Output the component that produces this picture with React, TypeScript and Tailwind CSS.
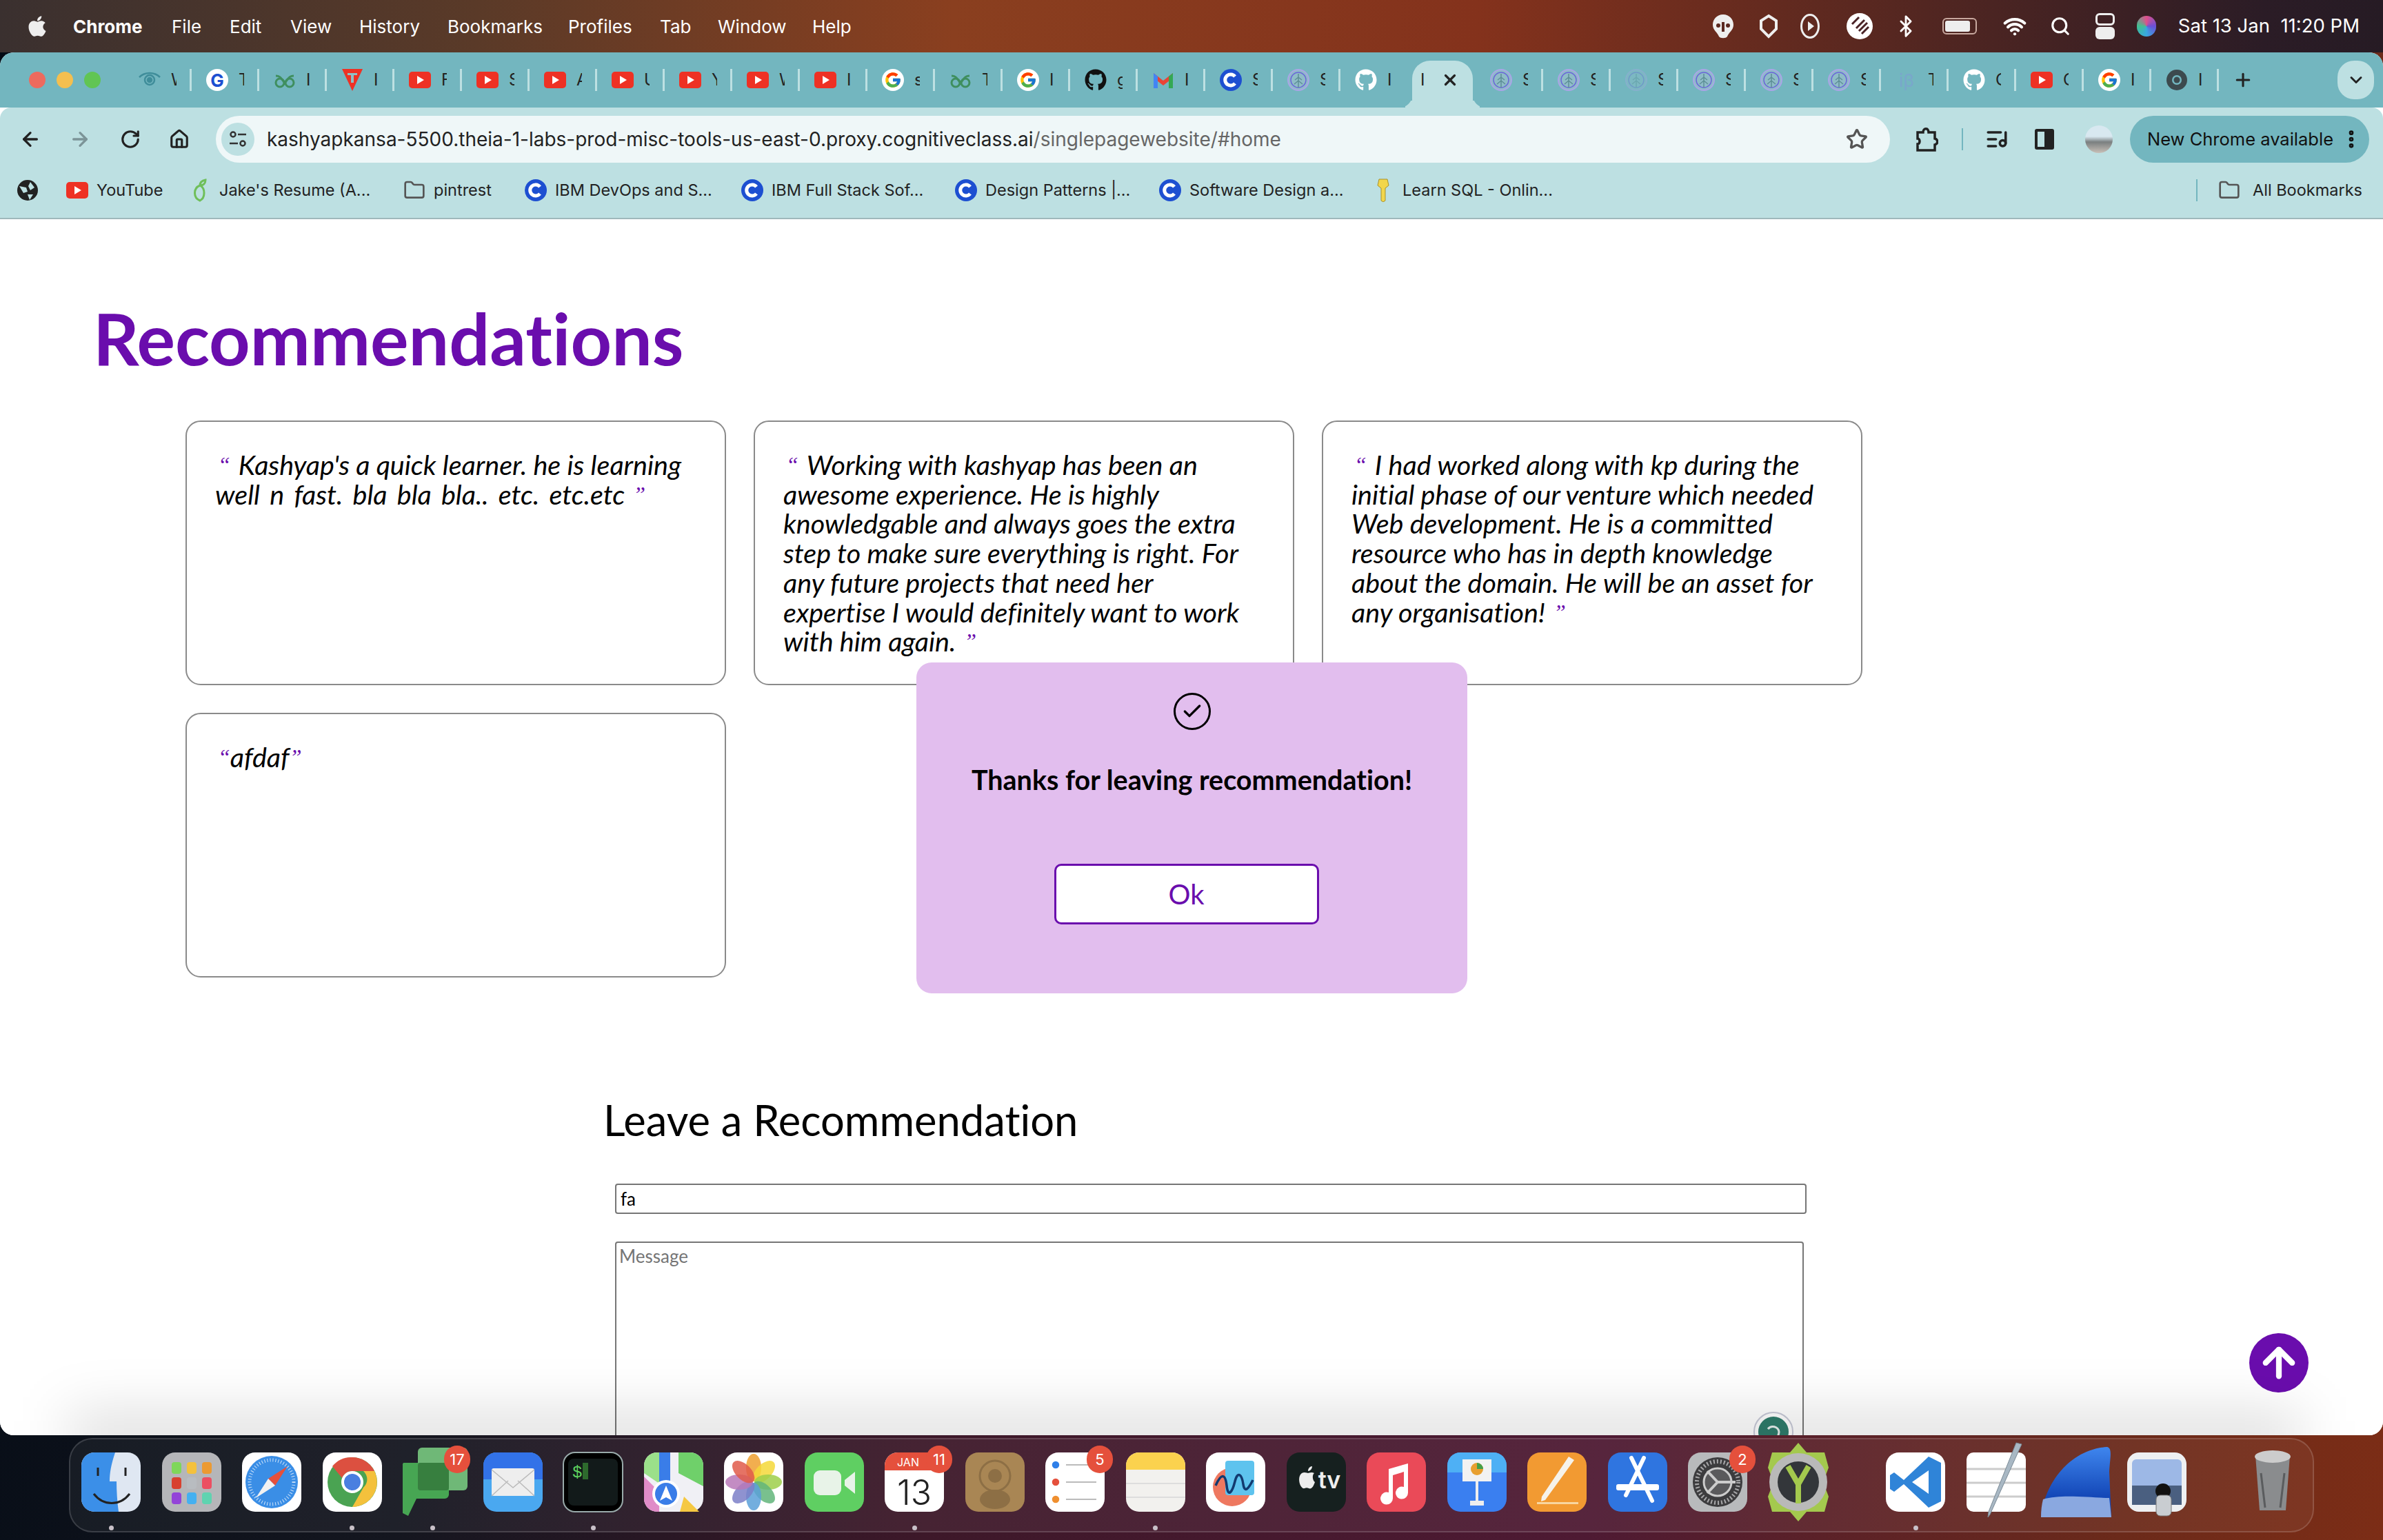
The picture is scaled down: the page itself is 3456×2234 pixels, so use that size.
import { ReactNode } from 'react'
import { FaApple, FaGithub } from 'react-icons/fa'
import { FcGoogle } from 'react-icons/fc'
import {
  ArrowLeft, ArrowRight, RotateCw, Home, Star, ListMusic, Folder, MoreVertical, Plus,
  ChevronDown, X, Search, Bluetooth, Wifi, ArrowUp, Check,
} from 'lucide-react'

const ui = "font-['Inter',sans-serif]"
const page = "font-['Lato',sans-serif] [font-variant-ligatures:none]"

const YT = ({ s = 32 }: { s?: number }) => (
  <svg width={s} height={s} viewBox="0 0 32 32"><rect y="4" width="32" height="24" rx="5" fill="#ee3124" /><path d="M12 10l10 6-10 6z" fill="#fff" /></svg>
)
const Coursera = () => (
  <svg width="32" height="32" viewBox="0 0 32 32"><circle cx="16" cy="16" r="16" fill="#1d4fd1" /><path d="M22 11a8 8 0 1 0 0 10" fill="none" stroke="#fff" strokeWidth="5" /></svg>
)
const Gfg = () => (
  <svg width="32" height="32" viewBox="0 0 32 32" fill="none" stroke="#3f8f5f" strokeWidth="3"><circle cx="9" cy="20" r="6" /><circle cx="23" cy="20" r="6" /><path d="M3 10c8 0 8 6 13 10 5-4 5-10 13-10" /></svg>
)
const Eye = () => (
  <svg width="34" height="32" viewBox="0 0 34 32" fill="none" stroke="#3f8d9a" strokeWidth="2.5"><path d="M2 12c8-8 22-8 30 0" /><circle cx="17" cy="16" r="7" /><circle cx="17" cy="16" r="3" fill="#3f8d9a" /></svg>
)
const Triangle = () => (
  <svg width="32" height="32" viewBox="0 0 32 32"><path d="M1 0h30L16 32z" fill="#ee3124" /><path d="M9 6h14v3h-5v11h-4V9H9z" fill="#8fc0c6" /></svg>
)
const Gmail = () => (
  <svg width="32" height="32" viewBox="0 0 32 32"><path d="M2 6l14 11L30 6v7L16 24 2 13z" fill="#ea4335" /><path d="M2 6v22h6V11z" fill="#4285f4" /><path d="M30 6v22h-6V11z" fill="#34a853" /></svg>
)
const Theia = ({ dim }: { dim?: boolean }) => (
  <svg width="32" height="32" viewBox="0 0 32 32" fill="none" opacity={dim ? 0.35 : 1}>
    <circle cx="16" cy="16" r="15" stroke="#a9a6e6" strokeWidth="2" fill="#8fbcc8" />
    <circle cx="16" cy="16" r="11" stroke="#6a68d8" strokeWidth="1.5" />
    <path d="M16 7v20M16 12l-5 4M16 12l5 4M16 17l-6 5M16 17l6 5" stroke="#5d8f96" strokeWidth="1.5" />
  </svg>
)
const WhiteG = () => (
  <span className="flex h-[32px] w-[32px] items-center justify-center rounded-full bg-white"><FcGoogle size={26} /></span>
)
const BlueG = () => (
  <span className="flex h-[32px] w-[32px] items-center justify-center rounded-full bg-white text-[26px] font-bold text-[#1d4fd1]">G</span>
)
const ChromeGrey = () => (
  <svg width="32" height="32" viewBox="0 0 32 32"><circle cx="16" cy="16" r="15" fill="#3c4a4e" /><circle cx="16" cy="16" r="7" fill="#73b6bf" /><circle cx="16" cy="16" r="4.5" fill="#3c4a4e" /></svg>
)

const tabs: [ReactNode, string][] = [
  [<Eye />, 'W'], [<BlueG />, 'T'], [<Gfg />, 'I'], [<Triangle />, 'I'], [<YT />, 'F'], [<YT />, 'S'], [<YT />, 'A'],
  [<YT />, 'U'], [<YT />, 'Y'], [<YT />, 'W'], [<YT />, 'I'], [<WhiteG />, 's'], [<Gfg />, 'T'], [<WhiteG />, 'I'],
  [<FaGithub size={32} color="#111" />, 'g'], [<Gmail />, 'I'], [<Coursera />, 'S'], [<Theia />, 'S'],
  [<FaGithub size={32} color="#fff" />, 'I'], [null, 'I'], [<Theia />, 'S'], [<Theia />, 'S'], [<Theia dim />, 'S'],
  [<Theia />, 'S'], [<Theia />, 'S'], [<Theia />, 'S'], [<span className="text-[26px] text-[#7aa6cc]">iβ</span>, 'T'],
  [<FaGithub size={32} color="#fff" />, 'C'], [<YT />, 'C'], [<WhiteG />, 'I'], [<ChromeGrey />, 'I'],
]

const bookmarks: [ReactNode, string, string][] = [
  [<YT s={32} />, 'YouTube', 'ml-[40px] w-[178px]'],
  [<svg width="26" height="34" viewBox="0 0 26 34" fill="none" stroke="#6fbf5a" strokeWidth="3"><path d="M13 32C3 28 3 14 13 10c8 4 8 18 0 22zM13 10c0-4 3-7 8-8 0 5-3 8-8 8z" /></svg>, "Jake's Resume (A...", 'w-[311px]'],
  [<Folder size={32} color="#555" strokeWidth={2} />, 'pintrest', 'w-[176px]'],
  [<Coursera />, 'IBM DevOps and S...', 'w-[314px]'],
  [<Coursera />, 'IBM Full Stack Sof...', 'w-[310px]'],
  [<Coursera />, 'Design Patterns |...', 'w-[296px]'],
  [<Coursera />, 'Software Design a...', 'w-[309px]'],
  [<svg width="20" height="34" viewBox="0 0 20 34"><path d="M4 1h12l2 9-5 4v18l-3 2-3-2V14l-5-4z" fill="#f2d64b" stroke="#a8912a" /></svg>, 'Learn SQL - Onlin...', ''],
]

const Q = ({ c }: { c: string }) => <span className="text-[#6a0dad] font-['Liberation_Serif',serif] text-[32px] align-[4px]">{c}</span>

const Card = ({ lines, loose }: { lines: string[]; loose?: boolean }) => (
  <div className="h-[384px] rounded-[22px] border-2 border-[#8a8a8a] bg-white pl-[41px] pr-[10px] pt-[41px] text-[39.5px] italic leading-[42.7px] whitespace-nowrap text-black">
    {lines.map((l, i) => (
      <div key={i} className={loose && i === 1 ? '[word-spacing:5px]' : ''}>
        {i === 0 && <span className="ml-[4px] mr-[12px]"><Q c="“" /></span>}
        {l}
        {i === lines.length - 1 && <span className="ml-[12px]"><Q c="”" /></span>}
      </div>
    ))}
  </div>
)

const Sq = ({ children }: { children: ReactNode }) => (
  <svg width="86" height="86" viewBox="0 0 86 86" className="overflow-visible">{children}</svg>
)

const dockIcons: { el: ReactNode; dot?: boolean; badge?: string }[] = [
  { dot: true, el: <Sq><rect width="86" height="86" rx="19" fill="#dfe7f2" /><path d="M19 0h30c-6 18-8 30-8 42h10c0 14 1 30 3 44H19A19 19 0 0 1 0 67V19A19 19 0 0 1 19 0z" fill="#3b8fe8" /><path d="M24 22v12M64 22v12" stroke="#222" strokeWidth="3" /><path d="M18 60c14 18 38 18 52 0" fill="none" stroke="#222" strokeWidth="3" /></Sq> },
  { el: <Sq><rect width="86" height="86" rx="19" fill="#b5b6b9" />{[['#7fd75a', '#f4c13c', '#ec9a32'], ['#d8412f', '#b8bcc0', '#ec4f62'], ['#9344d8', '#45b0f0', '#5fd3b0']].map((r, y) => r.map((c, x) => <rect key={c} x={14 + x * 22} y={14 + y * 22} width="14" height="17" rx="4" fill={c} />))}</Sq> },
  { el: <Sq><rect width="86" height="86" rx="19" fill="#fff" /><circle cx="43" cy="43" r="38" fill="#3a8ee6" /><circle cx="43" cy="43" r="32" fill="none" stroke="#cfe4fa" strokeWidth="5" strokeDasharray="1 3" /><path d="M66 20L38 38l10 10z" fill="#e5503c" /><path d="M20 66l18-28 10 10z" fill="#f2f2f2" /></Sq> },
  { dot: true, el: <Sq><rect width="86" height="86" rx="19" fill="#fff" /><circle cx="43" cy="43" r="36" fill="#4aa352" /><path d="M43 7a36 36 0 0 1 32 20H43a16 16 0 0 0-15 10L14 20A36 36 0 0 1 43 7z" fill="#dc5040" /><path d="M75 27a36 36 0 0 1-32 52l16-28a16 16 0 0 0 0-24z" fill="#f4c13c" /><circle cx="43" cy="43" r="16" fill="#fff" /><circle cx="43" cy="43" r="12" fill="#4a7fe0" /></Sq> },
  { dot: true, badge: '17', el: <Sq><rect x="22" y="-7" width="72" height="62" rx="6" fill="#6fb877" /><path d="M1 15h66v46a6 6 0 0 1-6 6H20L8 92l-8-4V20a5 5 0 0 1 1-5z" fill="#47a653" /><rect x="22" y="15" width="45" height="40" rx="4" fill="#377f3f" /></Sq> },
  { el: <Sq><rect width="86" height="86" rx="19" fill="#4aa8f0" /><path d="M19 0h48a19 19 0 0 1 19 19v20H0V19A19 19 0 0 1 19 0z" fill="#3272e8" /><rect x="12" y="23" width="62" height="40" rx="3" fill="#eee" /><path d="M12 25l31 26 31-26M12 63l24-22M74 63L50 41" fill="none" stroke="#bbb" strokeWidth="1.5" /></Sq> },
  { dot: true, el: <Sq><rect width="86" height="86" rx="17" fill="#000" stroke="#9aa" strokeWidth="2" /><rect x="7" y="9" width="72" height="68" rx="8" fill="#121a1a" /><text x="13" y="36" fill="#5fd35f" fontSize="24" fontFamily="Liberation Mono">$</text><rect x="28" y="15" width="8" height="24" fill="#2d6a2d" /></Sq> },
  { el: <Sq><rect width="86" height="86" rx="19" fill="#f0f0f5" /><path d="M50 0h17a19 19 0 0 1 19 19v30L50 30z" fill="#6fd06a" /><path d="M0 19A19 19 0 0 1 19 0h3v45L0 30z" fill="#9be08a" /><path d="M0 35l22 22v29H19A19 19 0 0 1 0 67z" fill="#e08cc8" /><path d="M52 86l6-22 22 22z" fill="#f5c842" /><rect x="22" width="16" height="50" fill="#3a7de8" /><circle cx="32" cy="60" r="20" fill="#fff" /><circle cx="32" cy="60" r="16" fill="#3a7de8" /><path d="M32 48l9 22-9-5-9 5z" fill="#fff" /></Sq> },
  { el: <Sq><rect width="86" height="86" rx="19" fill="#fff" />{['#f0a030', '#f5d83a', '#9dcf4a', '#62b57a', '#5aa0d8', '#7b7fc8', '#b878b8', '#e05a4a'].map((c, i) => <ellipse key={c} cx="43" cy="22" rx="11" ry="20" fill={c} opacity="0.85" transform={`rotate(${i * 45} 43 43)`} />)}</Sq> },
  { el: <Sq><rect width="86" height="86" rx="19" fill="#5fcf62" /><rect x="13" y="26" width="40" height="36" rx="9" fill="#e8f3e8" /><path d="M58 40l15-12v32L58 48z" fill="#e8f3e8" /></Sq> },
  { dot: true, badge: '11', el: <Sq><rect width="86" height="86" rx="19" fill="#fff" /><path d="M19 0h48a19 19 0 0 1 19 19v7H0v-7A19 19 0 0 1 19 0z" fill="#e5503c" /><text x="34" y="20" textAnchor="middle" fill="#fff" fontSize="16" fontFamily="Inter">JAN</text><text x="43" y="76" textAnchor="middle" fill="#222" fontSize="50" fontWeight="300" fontFamily="Inter">13</text></Sq> },
  { el: <Sq><rect width="86" height="86" rx="19" fill="#a98654" /><circle cx="43" cy="34" r="22" fill="none" stroke="#8d6f45" strokeWidth="3" /><circle cx="43" cy="34" r="10" fill="#8d6f45" /><ellipse cx="43" cy="68" rx="22" ry="14" fill="#8d6f45" /></Sq> },
  { badge: '5', el: <Sq><rect width="86" height="86" rx="19" fill="#fff" />{[['#2f7fe8', 18], ['#e5503c', 43], ['#ef8f2f', 68]].map(([c, y]) => <g key={c as string}><circle cx="15" cy={y as number} r="6" fill={c as string} stroke="#fff" strokeWidth="1.5" /><rect x="30" y={(y as number) - 1} width="44" height="2" fill="#bbb" /></g>)}</Sq> },
  { dot: true, el: <Sq><rect width="86" height="86" rx="19" fill="#f2f1ee" /><path d="M19 0h48a19 19 0 0 1 19 19v6H0v-6A19 19 0 0 1 19 0z" fill="#fbd24e" /><path d="M0 45h86M0 65h86" stroke="#ddd" strokeWidth="2" /></Sq> },
  { el: <Sq><rect width="86" height="86" rx="19" fill="#fff" /><circle cx="38" cy="50" r="28" fill="#ee7860" /><rect x="28" y="12" width="42" height="50" rx="4" fill="#5ec3ee" /><path d="M14 48c8-18 14-18 16 0s8 10 12-6 10-10 12 4 8 6 14-6" fill="none" stroke="#123a70" strokeWidth="3.5" /></Sq> },
  { el: <Sq><rect width="86" height="86" rx="19" fill="#16201f" /><path d="M22 30c4-2 8 0 9 0s5-2 9 0c-3 2-3 10 1 13-2 6-5 11-9 9-2-1-4-1-6 0-6 2-12-16-4-22zM31 27c0-4 3-7 6-7 0 4-3 7-6 7z" fill="#eee" /><text x="62" y="52" textAnchor="middle" fill="#eee" fontSize="34" fontWeight="600" fontFamily="Inter">tv</text></Sq> },
  { el: <Sq><rect width="86" height="86" rx="19" fill="#ea4a58" /><path d="M32 24l28-8v42a9 9 0 1 1-6-8V28l-16 5v33a9 9 0 1 1-6-8z" fill="#fff" /></Sq> },
  { el: <Sq><rect width="86" height="86" rx="19" fill="#3a7ff0" /><path d="M19 0h48a19 19 0 0 1 19 19v10H0V19A19 19 0 0 1 19 0z" fill="#4eb0f5" /><rect x="22" y="10" width="42" height="32" fill="#f2f2f2" /><circle cx="43" cy="24" r="9" fill="#e8a030" /><path d="M43 24V15a9 9 0 0 1 9 9z" fill="#45a04a" /><rect x="41" y="42" width="4" height="30" fill="#eee" /><rect x="33" y="70" width="20" height="7" fill="#eee" /></Sq> },
  { el: <Sq><rect width="86" height="86" rx="19" fill="#f29a32" /><path d="M60 6l8 5-42 58-6 2 1-7z" fill="#f6f2ea" /><rect x="14" y="72" width="60" height="3" fill="#f8d6a0" /></Sq> },
  { el: <Sq><rect width="86" height="86" rx="19" fill="#2f75e0" /><path d="M34 8l30 62M52 8L26 62" stroke="#fff" strokeWidth="6" strokeLinecap="round" /><rect x="12" y="46" width="62" height="9" rx="3" fill="#fff" /></Sq> },
  { badge: '2', el: <Sq><rect width="86" height="86" rx="19" fill="#b8babc" /><circle cx="43" cy="43" r="36" fill="#3c3c3e" /><circle cx="43" cy="43" r="30" fill="none" stroke="#a8a8aa" strokeWidth="6" strokeDasharray="2 3" /><circle cx="43" cy="43" r="20" fill="#5a5a5c" stroke="#ccc" strokeWidth="3" /><path d="M43 43h26M43 43L28 27M43 43L28 59" stroke="#ccc" strokeWidth="4" /></Sq> },
  { el: <Sq><path d="M43-14l12 14h26l6 22-8 21 8 21-6 22H55l-12 14-12-14H5l-6-22 8-21-8-21 6-22h26z" fill="#a4c94e" /><circle cx="43" cy="43" r="42" fill="#b9b9b9" /><circle cx="43" cy="43" r="30" fill="#33363a" /><path d="M28 20l15 26 15-26M43 44v30" fill="none" stroke="#a4c94e" strokeWidth="8" /></Sq> },
]

const dockIcons2: ReactNode[] = [
  <Sq><rect width="86" height="86" rx="19" fill="#fff" /><path d="M62 6l18 9v56l-18 9-36-34-14 11-6-4V33l6-4 14 11z" fill="#2f84d8" /><path d="M62 26v34L38 43z" fill="#fff" /></Sq>,
  <Sq><rect width="86" height="86" rx="10" fill="#fff" /><path d="M0 24h86M0 44h86M0 64h86" stroke="#ccc" strokeWidth="3" /><path d="M80-12L34 90l-3 4 1-8L72-14z" fill="#a9b8c4" stroke="#7a8a96" /></Sq>,
  <Sq><defs><linearGradient id="fin" x1="0" y1="0" x2="0" y2="1"><stop offset="0" stopColor="#3f86ee" /><stop offset="0.7" stopColor="#1448b8" /></linearGradient></defs><path d="M88-8c8 2 4 16 3 36l3 66H-8C-4 50 30-4 88-8z" fill="url(#fin)" /><path d="M-8 94c0-10 1-18 3-26 26-8 70-2 96-2l3 28z" fill="#8aa8e0" /></Sq>,
  <Sq><rect width="86" height="86" rx="17" fill="#eef0f2" /><rect x="7" y="10" width="72" height="66" rx="6" fill="#9db8e6" /><rect x="7" y="48" width="72" height="28" fill="#4a5f80" /><circle cx="52" cy="56" r="11" fill="#111" /><rect x="42" y="62" width="22" height="30" rx="6" fill="#c9cdd1" stroke="#777" /></Sq>,
]

function App() {
  return (
    <div className={`relative flex h-[2234px] w-[3456px] flex-col overflow-hidden bg-[linear-gradient(100deg,#020a14_0%,#14161f_25%,#3d1829_45%,#4e1a33_70%,#6b2a1a_90%,#7c2d16_100%)] ${ui}`}>
      {/* menu bar */}
      <div className="flex h-[76px] items-center bg-[linear-gradient(90deg,#3a302f_0%,#5a3a28_20%,#8a3f1f_40%,#84321c_62%,#5a2820_78%,#2b1c26_95%,#261b24_100%)] text-[26px] text-white">
        <FaApple size={34} className="ml-[37px] mr-[35px]" color="#eee" />
        <span className="w-[143px] font-bold">Chrome</span>
        <span className="w-[84px]">File</span>
        <span className="w-[88px]">Edit</span>
        <span className="w-[100px]">View</span>
        <span className="w-[128px]">History</span>
        <span className="w-[175px]">Bookmarks</span>
        <span className="w-[133px]">Profiles</span>
        <span className="w-[84px]">Tab</span>
        <span className="w-[137px]">Window</span>
        <span>Help</span>
        <div className="ml-auto flex items-center pr-[34px]">
          <svg width="32" height="36" viewBox="0 0 32 36" className="mr-[36px]"><path d="M16 1c9 0 15 7 15 15s-7 11-9 17c-2 3-10 3-12 0C8 27 1 24 1 16S7 1 16 1z" fill="#eee" /><circle cx="9" cy="17" r="3" fill="#5a2820" /><circle cx="23" cy="17" r="3" fill="#5a2820" /><rect x="14" y="12" width="4" height="14" fill="#5a2820" /></svg>
          <svg width="28" height="36" viewBox="0 0 28 36" className="mr-[32px]" fill="none" stroke="#eee" strokeWidth="4"><path d="M14 3l11 7v12L14 33 3 22V10z" /></svg>
          <span className="mr-[39px] flex h-[36px] w-[28px] items-center justify-center rounded-[50%] border-[3px] border-[#eee]"><span className="ml-[3px] border-y-[7px] border-l-[9px] border-y-transparent border-l-[#eee]" /></span>
          <svg width="38" height="42" viewBox="0 0 38 42" className="mr-[31px]"><circle cx="19" cy="21" r="19" fill="#fff" /><path d="M14 24l12-12M18 28l12-12M22 32l10-10M8 18l10-10" stroke="#4a2326" strokeWidth="3" /></svg>
          <Bluetooth size={34} className="mr-[36px]" />
          <span className="mr-[38px] flex h-[24px] w-[50px] items-center rounded-[6px] border-2 border-[#c9a9a0] p-[2px]"><span className="h-full w-[36px] rounded-[3px] bg-[#eee]" /></span>
          <Wifi size={34} strokeWidth={3} className="mr-[34px]" />
          <Search size={30} strokeWidth={2.5} className="mr-[36px]" />
          <span className="mr-[32px] flex h-[38px] w-[28px] flex-col gap-[2px]"><span className="h-[18px] rounded-[6px] border-[3px] border-[#eee]" /><span className="h-[18px] rounded-[6px] bg-[#eee]" /></span>
          <span className="mr-[32px] h-[30px] w-[28px] rounded-full bg-[conic-gradient(#e0508a,#6a50d8,#38a8e0,#40c090,#e0508a)]" />
          <span className="whitespace-pre text-[27.5px]">Sat 13 Jan  11:20 PM</span>
        </div>
      </div>

      {/* chrome window */}
      <div className="relative flex h-[2006px] flex-col overflow-hidden rounded-[20px] bg-white">
        <div className="flex h-[80px] bg-[#73b6bf] pt-[12px]">
          <div className="flex h-[56px] w-[180px] items-center gap-[16px] pl-[42px]">
            <span className="h-[24px] w-[24px] rounded-full bg-[#ed6a5e]" />
            <span className="h-[24px] w-[24px] rounded-full bg-[#f4bf4f]" />
            <span className="h-[24px] w-[24px] rounded-full bg-[#61c554]" />
          </div>
          {tabs.map(([icon, letter], i) =>
            icon === null ? (
              <div key={i} className="relative ml-[6px] mr-[4px] flex h-[68px] w-[88px] shrink-0 items-center rounded-t-[26px] bg-[#bde0e2] pb-[12px] pl-[12px]">
                <span className="mr-[25px] w-[5px] overflow-hidden text-[24px] text-[#222]">I</span>
                <X size={26} color="#222" strokeWidth={3} />
                <span className="absolute bottom-0 left-[-18px] h-[18px] w-[18px] rounded-br-[18px] shadow-[8px_8px_0_#bde0e2]" />
                <span className="absolute bottom-0 right-[-18px] h-[18px] w-[18px] rounded-bl-[18px] shadow-[-8px_8px_0_#bde0e2]" />
              </div>
            ) : (
              <div key={i} className="flex h-[56px] w-[98px] shrink-0 items-center">
                <span className="ml-[20px] flex w-[34px] items-center justify-center">{icon}</span>
                <span className="ml-[14px] w-[8px] overflow-hidden text-[24px] leading-[32px] text-[#222]">{letter}</span>
                <span className={`ml-auto h-[32px] w-[3px] ${i === 18 || i === 19 ? 'bg-transparent' : 'bg-[#bde0e2]'}`} />
              </div>
            ),
          )}
          <Plus size={30} color="#222" strokeWidth={2.5} className="ml-[20px] mt-[13px]" />
          <div className="ml-[122px] flex h-[56px] w-[53px] items-center justify-center rounded-[24px] bg-[#bde0e2]"><ChevronDown size={28} color="#222" strokeWidth={2.5} /></div>
        </div>

        {/* toolbar */}
        <div className="flex h-[80px] items-end rounded-t-[16px] bg-[#bde0e2] pl-[28px]">
          <div className="flex h-[68px] items-center">
            <ArrowLeft size={32} color="#222" strokeWidth={2.5} />
            <ArrowRight size={32} color="#7c9498" strokeWidth={2.5} className="ml-[40px]" />
            <RotateCw size={30} color="#222" strokeWidth={2.5} className="ml-[42px]" />
            <Home size={30} color="#222" strokeWidth={2.5} className="ml-[41px]" />
          </div>
          <div className="ml-[38px] flex h-[68px] w-[2428px] items-center rounded-full bg-[#eff7f8] pl-[8px] pr-[32px]">
            <span className="flex h-[48px] w-[48px] items-center justify-center rounded-full bg-[#bde0e2]">
              <svg width="26" height="26" viewBox="0 0 26 26" fill="none" stroke="#333" strokeWidth="2.5"><circle cx="6" cy="6" r="3.5" /><path d="M13 6h12M1 19h12" /><circle cx="20" cy="19" r="3.5" /></svg>
            </span>
            <span className="ml-[18px] text-[28px] text-[#222]">kashyapkansa-5500.theia-1-labs-prod-misc-tools-us-east-0.proxy.cognitiveclass.ai<span className="text-[#666]">/singlepagewebsite/#home</span></span>
            <Star size={32} color="#555" strokeWidth={2.5} className="ml-auto" />
          </div>
          <div className="flex h-[68px] items-center">
            <svg width="34" height="36" viewBox="0 0 34 36" fill="none" stroke="#222" strokeWidth="3.5" className="ml-[36px]"><path d="M4 8h8c0-7 8-7 8 0h9v9c5 1 5 8 0 9v8H4v-9c4 0 4-8 0-8z" /></svg>
            <span className="ml-[34px] h-[32px] w-[2px] bg-[#73b6bf]" />
            <ListMusic size={34} color="#222" strokeWidth={2.5} className="ml-[32px]" />
            <span className="ml-[38px] h-[30px] w-[28px] rounded-[3px] border-[4px] border-[#222] bg-[linear-gradient(90deg,transparent_50%,#222_50%)]" />
            <span className="ml-[45px] h-[40px] w-[40px] rounded-full bg-[linear-gradient(180deg,#d8e8f0_40%,#7a7f80_60%,#c8c0b8)]" />
            <div className="ml-[25px] flex h-[68px] w-[347px] items-center rounded-full bg-[#73b6bf] pl-[25px] text-[25.5px] text-[#111]">
              New Chrome available
              <MoreVertical size={32} color="#111" strokeWidth={3} className="ml-[10px]" />
            </div>
          </div>
        </div>

        {/* bookmarks */}
        <div className="flex h-[82px] items-center border-b-2 border-[#9fb8bb] bg-[#bde0e2] pl-[24px] text-[23.5px] text-[#222]">
          <svg width="32" height="32" viewBox="0 0 32 32"><circle cx="16" cy="16" r="15" fill="#222" /><path d="M4 10l10 2 2 6-6 2zM20 4l6 8-6 4-3-6zM16 22l8 0-5 8z" fill="#bde0e2" /></svg>
          {bookmarks.map(([icon, label, w]) => (
            <div key={label} className={`flex shrink-0 items-center gap-[12px] ${w}`}>
              <span className="flex w-[32px] shrink-0 justify-center">{icon}</span>
              <span className="whitespace-nowrap">{label}</span>
            </div>
          ))}
          <span className="ml-auto mr-[30px] h-[32px] w-[2px] bg-[#73b6bf]" />
          <Folder size={32} color="#555" strokeWidth={2} className="mr-[18px]" />
          <span className="pr-[30px]">All Bookmarks</span>
        </div>

        {/* page */}
        <div className={`relative flex-1 overflow-hidden bg-white ${page}`}>
          <h1 className="ml-[135px] mt-[122px] text-[104px] font-bold leading-[100px] text-[#6a0dad]">Recommendations</h1>
          <div className="ml-[269px] mt-[70px] grid w-[2432px] grid-cols-[784px_784px_784px] gap-[40px]">
            <Card loose lines={["Kashyap's a quick learner. he is learning", 'well n fast. bla bla bla.. etc. etc.etc']} />
            <Card lines={['Working with kashyap has been an', 'awesome experience. He is highly', 'knowledgable and always goes the extra', 'step to make sure everything is right. For', 'any future projects that need her', 'expertise I would definitely want to work', 'with him again.']} />
            <Card lines={['I had worked along with kp during the', 'initial phase of our venture which needed', 'Web development. He is a committed', 'resource who has in depth knowledge', 'about the domain. He will be an asset for', 'any organisation!']} />
            <div className="h-[384px] rounded-[22px] border-2 border-[#8a8a8a] bg-white pl-[45px] pt-[41px] text-[39.5px] italic leading-[42.7px]"><Q c="“" />afdaf<Q c="”" /></div>
          </div>
          <h2 className="ml-[875px] mt-[168px] text-[61.5px] leading-[76px] text-black">Leave a Recommendation</h2>
          <input readOnly value="fa" className="ml-[892px] mt-[55px] block h-[44px] w-[1728px] rounded-[4px] border-2 border-[#767676] bg-white px-[6px] text-[26px] text-black outline-none" />
          <textarea readOnly placeholder="Message" className="ml-[892px] mt-[40px] block h-[400px] w-[1724px] resize-none rounded-[4px] border-2 border-[#767676] bg-white px-[4px] text-[26px] outline-none placeholder:text-[#757575]" />

          {/* grammar helper badge on the textarea */}
          <span className="absolute bottom-[-24px] left-[2543px] flex h-[58px] w-[58px] items-center justify-center rounded-full border-2 border-[#c8cad8] bg-white">
            <svg width="44" height="44" viewBox="0 0 44 44"><circle cx="22" cy="22" r="22" fill="#2f7d6c" /><path d="M14 18a9 9 0 0 1 16 4c0 5-3 8-3 12" fill="none" stroke="#e8f0ee" strokeWidth="3" /></svg>
          </span>

          {/* modal */}
          <div className="absolute left-[1329px] top-[643px] flex h-[480px] w-[799px] flex-col items-center rounded-[22px] bg-[#e2beee]">
            <span className="mt-[44px] flex h-[54px] w-[54px] items-center justify-center rounded-full border-[3px] border-black"><Check size={32} color="#000" strokeWidth={2.5} /></span>
            <p className="mt-[48px] text-[39.5px] font-bold leading-[48px] text-black">Thanks for leaving recommendation!</p>
            <button className="ml-[-16px] mt-[98px] h-[88px] w-[384px] rounded-[10px] border-[3px] border-[#6a0dad] bg-white text-[40px] text-[#6a0dad]">Ok</button>
          </div>

          {/* back to top */}
          <span className="absolute left-[3262px] top-[1616px] flex h-[86px] w-[86px] items-center justify-center rounded-full bg-[#6a0dad]"><ArrowUp size={66} color="#fff" strokeWidth={3} /></span>

          {/* dock reflection on the window bottom */}
          <div className="pointer-events-none absolute bottom-[-30px] left-[100px] right-[120px] h-[60px] bg-black/15 blur-2xl" />
        </div>
      </div>

      {/* dock */}
      <div className="ml-[100px] mt-[4px] flex h-[137px] w-[3256px] items-start rounded-[34px] border-2 border-white/15 bg-white/5 pl-[1px] pt-[19px]">
        {dockIcons.map((d, i) => (
          <div key={i} className="relative flex w-[116.5px] shrink-0 flex-col items-center">
            {d.el}
            <span className={`mt-[20px] h-[7px] w-[7px] rounded-full ${d.dot ? 'bg-[#c8c0c8]' : 'bg-transparent'}`} />
            {d.badge && <span className="absolute left-[75px] top-[-10px] flex h-[40px] w-[38px] items-center justify-center rounded-full bg-[#e5503c] text-[22px] text-white">{d.badge}</span>}
          </div>
        ))}
        <span className="ml-[30px] mr-[24px] mt-[0px] h-[102px] w-[2px] bg-white/25" />
        {dockIcons2.map((el, i) => (
          <div key={i} className="flex w-[116.5px] shrink-0 flex-col items-center">
            {el}
            <span className={`mt-[20px] h-[7px] w-[7px] rounded-full ${i === 0 ? 'bg-[#c8c0c8]' : 'bg-transparent'}`} />
          </div>
        ))}
        <span className="ml-[28px] mr-[24px] h-[102px] w-[2px] bg-white/25" />
        <div className="flex w-[116.5px] shrink-0 justify-center">
          <Sq><path d="M18 4h50l-6 80H24z" fill="#8a8c8e" /><ellipse cx="43" cy="6" rx="26" ry="9" fill="#ccc" /><path d="M26 30l6 50M60 30l-6 50" stroke="#5a5c5e" strokeWidth="3" /></Sq>
        </div>
      </div>
    </div>
  )
}

export default App
